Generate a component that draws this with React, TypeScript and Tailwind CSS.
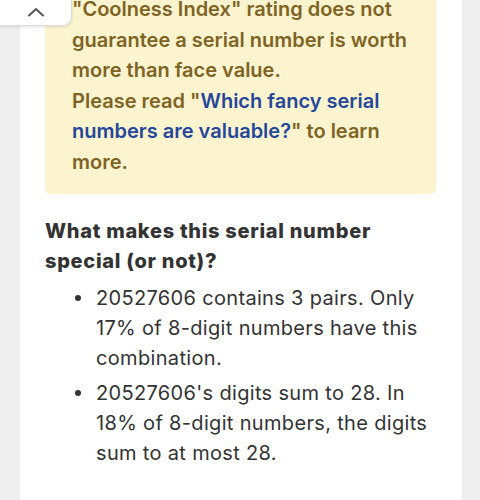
import React from "react";

export default function App() {
  return (
    <div
      className="relative w-[480px] h-[500px] overflow-hidden bg-[#efefef]"
      style={{ fontFamily: "Inter, 'Noto Sans', sans-serif" }}
    >
      <div className="mx-[20px] w-[442px] h-[520px] bg-white pl-[25px] pr-[26px]">
        <div className="-mt-[6px] rounded-b-[5px] bg-[#fcf3cf] pl-[27px] pr-[18px] pb-[17px] text-[20px] leading-[30.5px] font-semibold text-[#7e6424]">
          <p>"Coolness Index" rating does not guarantee a serial number is worth more than face value.</p>
          <p>
            Please read "<span className="text-[#24479a]">Which fancy serial numbers are valuable?</span>" to learn more.
          </p>
        </div>
        <h2 className="mt-[22px] text-[20px] leading-[30px] font-extrabold tracking-[0.7px] text-[#333333]">
          What makes this serial number special (or not)?
        </h2>
        <ul className="mt-[7px] text-[20px] leading-[30px] tracking-[0.33px] text-[#333333]">
          <li className="flex">
            <span className="w-[51px] shrink-0 flex justify-end pr-[15px] pt-[12px]">
              <span className="block w-[6px] h-[6px] rounded-full bg-[#333333]" />
            </span>
            <span>20527606 contains 3 pairs. Only 17% of 8-digit numbers have this combination.</span>
          </li>
          <li className="flex mt-[5px]">
            <span className="w-[51px] shrink-0 flex justify-end pr-[15px] pt-[12px]">
              <span className="block w-[6px] h-[6px] rounded-full bg-[#333333]" />
            </span>
            <span>20527606's digits sum to 28. In 18% of 8-digit numbers, the digits sum to at most 28.</span>
          </li>
        </ul>
      </div>
      <div className="absolute left-0 top-0 w-[72px] h-[26px] bg-white rounded-br-[9px] border-r border-b border-[#dcdcdc] shadow-[0_1px_3px_rgba(0,0,0,0.12)] flex items-center justify-center">
        <svg width="18" height="10" viewBox="0 0 18 10" fill="none" className="-mt-[2px]">
          <path d="M2 8.5L9 2L16 8.5" stroke="#555" strokeWidth="2" strokeLinecap="round" strokeLinejoin="round" />
        </svg>
      </div>
    </div>
  );
}
